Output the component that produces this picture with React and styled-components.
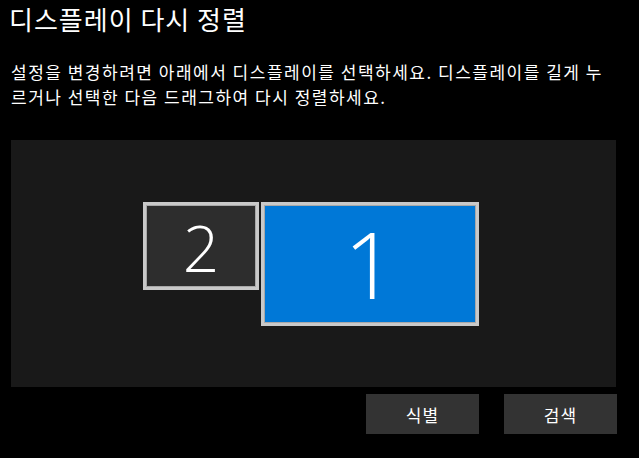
import React from "react";
import styled, { createGlobalStyle } from "styled-components";

const MONITORS = [
  { id: 2, width: 116, height: 88, size: 64, active: false },
  { id: 1, width: 218, height: 124, size: 92, active: true }
];

const GlobalStyle = createGlobalStyle`
  html, body {
    margin: 0;
    padding: 0;
    background: #000;
  }
  body {
    font-family: "Noto Sans CJK KR", "Noto Sans", sans-serif;
    color: #fff;
  }
`;

const Page = styled.div`
  width: 639px;
  height: 458px;
  box-sizing: border-box;
  padding: 0 23px 0 11px;
  display: flex;
  flex-direction: column;
  overflow: hidden;
`;

const Title = styled.h1`
  margin: 1px 0 0 -2px;
  font-size: 26px;
  letter-spacing: 1px;
  line-height: 35px;
  font-weight: 400;
  color: #fff;
`;

const Description = styled.p`
  margin: 23px 0 0;
  font-size: 17px;
  letter-spacing: 1.5px;
  line-height: 25px;
  color: #fff;
  white-space: nowrap;
`;

const Canvas = styled.div`
  margin-top: 31px;
  height: 247px;
  background: #191919;
  display: flex;
  align-items: center;
  justify-content: center;
`;

const MonitorRow = styled.div`
  display: flex;
  align-items: flex-start;
  gap: 2px;
  margin-left: -5px;
`;

const Monitor = styled.div`
  box-sizing: border-box;
  width: ${(p) => p.$w}px;
  height: ${(p) => p.$h}px;
  background: ${(p) => (p.$active ? "#0078d7" : "#2d2d2d")};
  border: 3px solid #c9c9c9;
  box-shadow: inset 0 0 0 1px #a8a8a8;
  display: flex;
  align-items: center;
  justify-content: center;
  font-family: "Open Sans", "Noto Sans", sans-serif;
  font-weight: 300;
  font-size: ${(p) => p.$size}px;
  line-height: 1;
  color: #fff;
`;

const Digit = styled.span`
  display: block;
  margin-top: ${(p) => (p.$active ? 0 : 4)}px;
`;

const ButtonRow = styled.div`
  margin-top: 7px;
  display: flex;
  justify-content: flex-end;
  gap: 25px;
  margin-right: -1px;
`;

const Button = styled.button`
  width: 113px;
  height: 40px;
  border: none;
  background: #333333;
  color: #fff;
  font-family: "Noto Sans CJK KR", "Noto Sans", sans-serif;
  font-size: 17px;
  letter-spacing: 1px;
  padding: 0;
`;

export default function App() {
  return (
    <>
      <GlobalStyle />
      <Page>
        <Title>디스플레이 다시 정렬</Title>
        <Description>
          설정을 변경하려면 아래에서 디스플레이를 선택하세요. 디스플레이를 길게 누
          <br />
          르거나 선택한 다음 드래그하여 다시 정렬하세요.
        </Description>
        <Canvas>
          <MonitorRow>
            {MONITORS.map((m) => (
              <Monitor
                key={m.id}
                $w={m.width}
                $h={m.height}
                $size={m.size}
                $active={m.active}
              >
                <Digit $active={m.active}>{m.id}</Digit>
              </Monitor>
            ))}
          </MonitorRow>
        </Canvas>
        <ButtonRow>
          <Button>식별</Button>
          <Button>검색</Button>
        </ButtonRow>
      </Page>
    </>
  );
}
